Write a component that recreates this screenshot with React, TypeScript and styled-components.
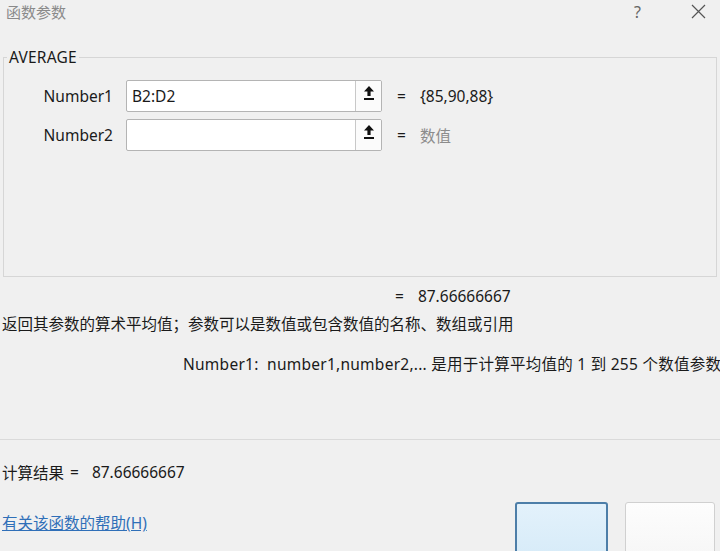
import React from "react";
import styled, { createGlobalStyle } from "styled-components";

const Global = createGlobalStyle`
  html, body { margin: 0; padding: 0; }
  body {
    width: 720px; height: 551px; overflow: hidden;
    background: #f0f0f0;
    font-family: "Noto Sans", "Noto Sans CJK SC", sans-serif;
    color: #1a1a1a;
  }
  * { box-sizing: border-box; }
`;

const Dialog = styled.div`
  width: 720px;
  height: 551px;
  display: flex;
  flex-direction: column;
  background: #f0f0f0;
  overflow: hidden;
  font-size: 15.5px;
  & > * { flex-shrink: 0; }
`;

const TitleBar = styled.div`
  height: 30px;
  display: flex;
  align-items: center;
  justify-content: space-between;
  padding: 0 14px 7px 6px;
`;

const Title = styled.div`
  color: #8a8a8a;
  font-size: 15px;
  font-family: "Noto Sans CJK SC", sans-serif;
`;

const TitleIcons = styled.div`
  display: flex;
  align-items: center;
  gap: 50px;
  color: #555;
`;

const HelpMark = styled.span`
  font-size: 16px;
  color: #666;
`;

const GroupBox = styled.fieldset`
  margin: 17px 3px 0 3px;
  padding: 13px 0 0 0;
  height: 230px;
  border: 1px solid #d6d6d6;
  border-radius: 0;
`;

const Legend = styled.legend`
  margin-left: 3px;
  padding: 0 2px;
  font-size: 15.5px;
  line-height: 20px;
  color: #1a1a1a;
  letter-spacing: 0.2px;
`;

const ArgGrid = styled.div`
  display: grid;
  grid-template-columns: 109px 256px auto 1fr;
  column-gap: 13px;
  row-gap: 7px;
  align-items: center;
`;

const ArgLabel = styled.div`
  text-align: right;
`;

const RefBox = styled.div`
  display: flex;
  height: 32px;
  border: 1px solid #b4b4b4;
  border-radius: 2px;
  background: #fff;
  overflow: hidden;
`;

const RefInput = styled.div`
  flex: 1;
  padding: 0 5px;
  display: flex;
  align-items: center;
`;

const RefButton = styled.div`
  width: 26px;
  border-left: 1px solid #c8c8c8;
  background: #fbfbfb;
  display: flex;
  align-items: flex-start;
  justify-content: center;
  padding-top: 4px;
`;

const Eq = styled.span`
  margin-left: 2px;
  margin-right: 14px;
  color: #1a1a1a;
`;

const ValueCell = styled.div<{ $muted?: boolean }>`
  display: flex;
  align-items: center;
  color: ${(p) => (p.$muted ? "#8c8c8c" : "#1a1a1a")};
`;

const ResultRow = styled.div`
  margin-top: 6px;
  padding-left: 393px;
  height: 26px;
  display: flex;
  align-items: center;
`;

const Description = styled.div`
  padding-left: 2px;
  height: 28px;
  display: flex;
  align-items: center;
  white-space: nowrap;
`;

const ArgDescription = styled.div`
  margin-top: 12px;
  padding-left: 183px;
  height: 28px;
  display: flex;
  align-items: center;
  white-space: nowrap;
  letter-spacing: 0.25px;
`;

const Separator = styled.div`
  margin-top: 62px;
  height: 1px;
  background: #dadada;
`;

const CalcRow = styled.div`
  margin-top: 19px;
  padding-left: 2px;
  height: 26px;
  display: flex;
  align-items: center;
  white-space: nowrap;
`;

const CalcEq = styled.span`
  margin: 0 13px 0 6px;
`;

const Footer = styled.div`
  display: flex;
  align-items: flex-start;
  justify-content: space-between;
`;

const HelpLink = styled.a`
  margin-top: 26px;
  margin-left: 2px;
  color: #2f6fb8;
  text-decoration: underline;
  font-size: 15.5px;
  cursor: pointer;
`;

const Buttons = styled.div`
  display: flex;
  gap: 17px;
  padding-right: 5px;
  margin-top: 17px;
`;

const DlgButton = styled.button<{ $primary?: boolean }>`
  width: ${(p) => (p.$primary ? 93 : 90)}px;
  height: 60px;
  border-radius: 3px;
  border: ${(p) => (p.$primary ? "2px solid #4d7ea8" : "1px solid #d0d0d0")};
  background: ${(p) =>
    p.$primary
      ? "linear-gradient(#e3f1fb, #d6ebf8)"
      : "linear-gradient(#fdfdfd, #f6f6f6)"};
`;

const UploadIcon = () => (
  <svg width="12" height="16" viewBox="0 0 12 16">
    <path d="M6 1 L11 6.5 L7.6 6.5 L7.6 11 L4.4 11 L4.4 6.5 L1 6.5 Z" fill="#111" />
    <rect x="1" y="13" width="10" height="2" fill="#111" />
  </svg>
);

const CloseIcon = () => (
  <svg width="15" height="15" viewBox="0 0 15 15">
    <path d="M1 1 L14 14 M14 1 L1 14" stroke="#555" strokeWidth="1.2" />
  </svg>
);

const args = [
  { name: "Number1", ref: "B2:D2", value: "{85,90,88}", muted: false },
  { name: "Number2", ref: "", value: "数值", muted: true },
];

export default function App() {
  return (
    <>
      <Global />
      <Dialog>
        <TitleBar>
          <Title>函数参数</Title>
          <TitleIcons>
            <HelpMark>?</HelpMark>
            <CloseIcon />
          </TitleIcons>
        </TitleBar>
        <GroupBox>
          <Legend>AVERAGE</Legend>
          <ArgGrid>
            {args.map((a) => (
              <React.Fragment key={a.name}>
                <ArgLabel>{a.name}</ArgLabel>
                <RefBox>
                  <RefInput>{a.ref}</RefInput>
                  <RefButton>
                    <UploadIcon />
                  </RefButton>
                </RefBox>
                <ValueCell $muted={a.muted}>
                  <Eq>=</Eq>
                  {a.value}
                </ValueCell>
                <div />
              </React.Fragment>
            ))}
          </ArgGrid>
        </GroupBox>
        <ResultRow>
          <Eq>=</Eq>87.66666667
        </ResultRow>
        <Description>
          返回其参数的算术平均值；参数可以是数值或包含数值的名称、数组或引用
        </Description>
        <ArgDescription>
          Number1:&nbsp;&nbsp;number1,number2,... 是用于计算平均值的 1 到 255 个数值参数
        </ArgDescription>
        <Separator />
        <CalcRow>
          计算结果<CalcEq>=</CalcEq>87.66666667
        </CalcRow>
        <Footer>
          <HelpLink>有关该函数的帮助(H)</HelpLink>
          <Buttons>
            <DlgButton $primary />
            <DlgButton />
          </Buttons>
        </Footer>
      </Dialog>
    </>
  );
}
